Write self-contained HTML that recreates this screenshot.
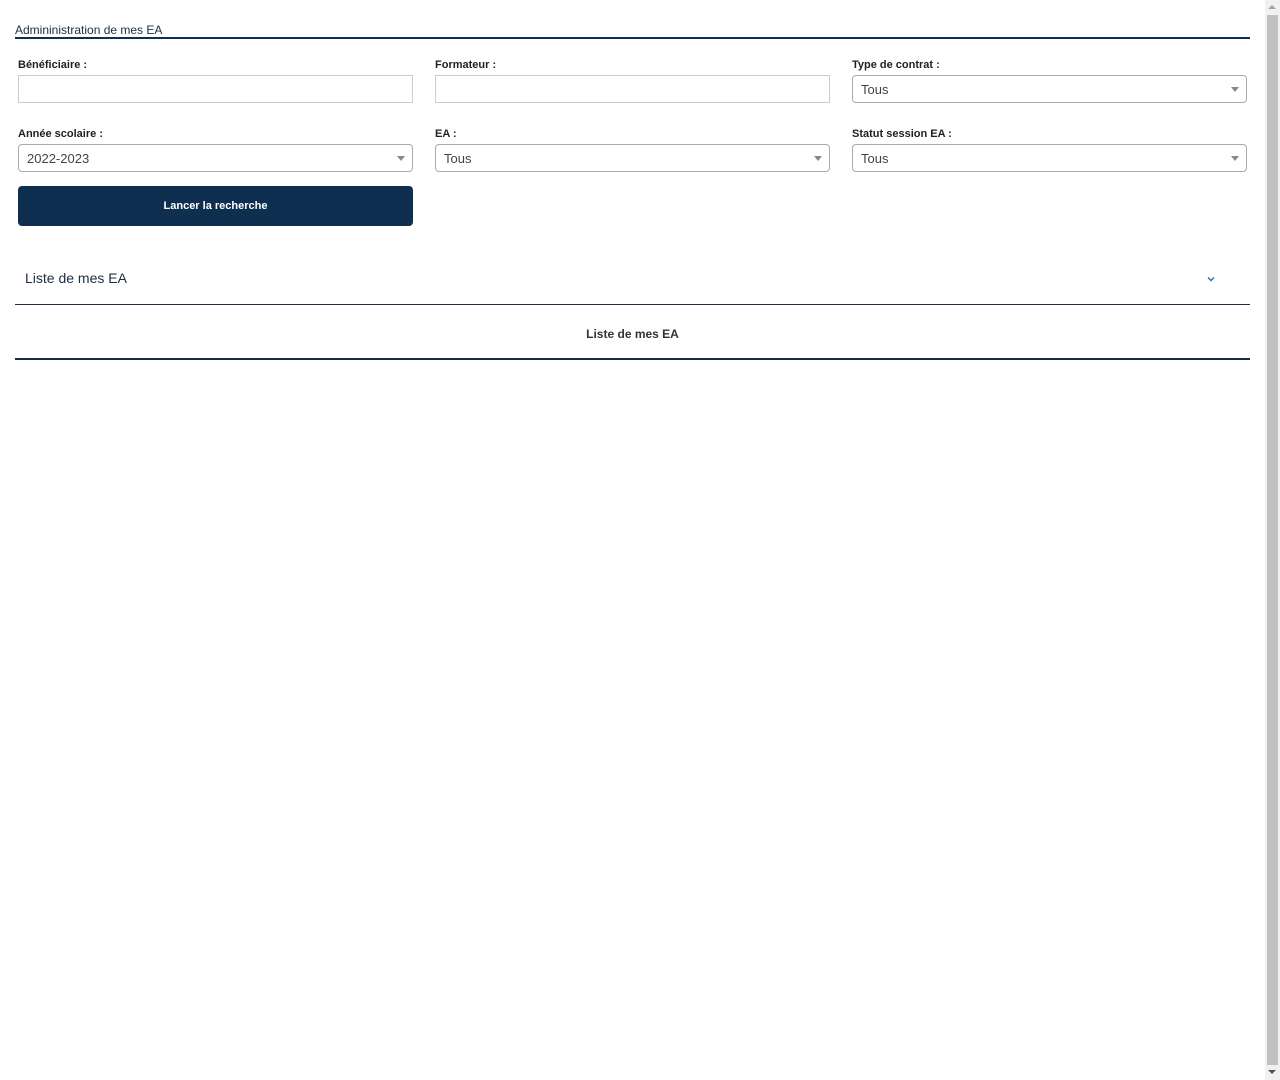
<!DOCTYPE html>
<html><head><meta charset="utf-8"><style>
*{box-sizing:border-box;margin:0;padding:0}
body{width:1280px;height:1080px;background:#fff;font-family:"Liberation Sans",sans-serif;color:#333;position:relative;overflow:hidden}
.a{position:absolute}
.lbl{font-size:11px;font-weight:bold;color:#222}
.inp{height:28px;width:395px;border:1px solid #ccc;background:#fff}
.sel{height:28px;width:395px;border:1px solid #aaa;border-radius:4px;background:#fff;font-size:13px;color:#444;padding:6px 8px;line-height:15px}
.sel:after{content:"";position:absolute;right:7px;top:11px;border-left:4px solid transparent;border-right:4px solid transparent;border-top:5px solid #888}
</style></head><body>
<div class="a" style="left:15px;top:23px;font-size:12px;color:#1d2d44">Admininistration de mes EA</div>
<div class="a" style="left:15px;top:37px;width:1235px;height:2px;background:#0e2f4f"></div>

<div class="a lbl" style="left:18px;top:59px">Bénéficiaire :</div>
<div class="a inp" style="left:18px;top:75px"></div>
<div class="a lbl" style="left:435px;top:59px">Formateur :</div>
<div class="a inp" style="left:435px;top:75px"></div>
<div class="a lbl" style="left:852px;top:59px">Type de contrat :</div>
<div class="a sel" style="left:852px;top:75px">Tous</div>

<div class="a lbl" style="left:18px;top:128px">Année scolaire :</div>
<div class="a sel" style="left:18px;top:144px">2022-2023</div>
<div class="a lbl" style="left:435px;top:128px">EA :</div>
<div class="a sel" style="left:435px;top:144px">Tous</div>
<div class="a lbl" style="left:852px;top:128px">Statut session EA :</div>
<div class="a sel" style="left:852px;top:144px">Tous</div>

<div class="a" style="left:18px;top:186px;width:395px;height:40px;background:#0e2f4f;border-radius:4px;color:#fff;font-size:11px;font-weight:bold;text-align:center;line-height:40px">Lancer la recherche</div>

<div class="a" style="left:25px;top:270px;font-size:14px;color:#1d2d44">Liste de mes EA</div>
<svg class="a" style="left:1206px;top:275px" width="10" height="8" viewBox="0 0 10 8"><path d="M2 2.5 L5 5.5 L8 2.5" fill="none" stroke="#2d6bb5" stroke-width="1.4"/></svg>
<div class="a" style="left:15px;top:304px;width:1235px;height:1px;background:#1d2d44"></div>
<div class="a" style="left:15px;top:327px;width:1235px;text-align:center;font-size:12px;font-weight:bold;color:#333">Liste de mes EA</div>
<div class="a" style="left:15px;top:358px;width:1235px;height:2px;background:#0e2f4f"></div>

<div class="a" style="left:1265px;top:0;width:15px;height:1080px;background:#f1f1f1"></div>
<div class="a" style="left:1267px;top:15px;width:11px;height:1050px;background:#c1c1c1"></div>
<div class="a" style="left:1268px;top:5px;border-left:4px solid transparent;border-right:4px solid transparent;border-bottom:4px solid #a3a3a3"></div>
<div class="a" style="left:1268px;top:1070px;border-left:4px solid transparent;border-right:4px solid transparent;border-top:4px solid #505050"></div>
</body></html>
